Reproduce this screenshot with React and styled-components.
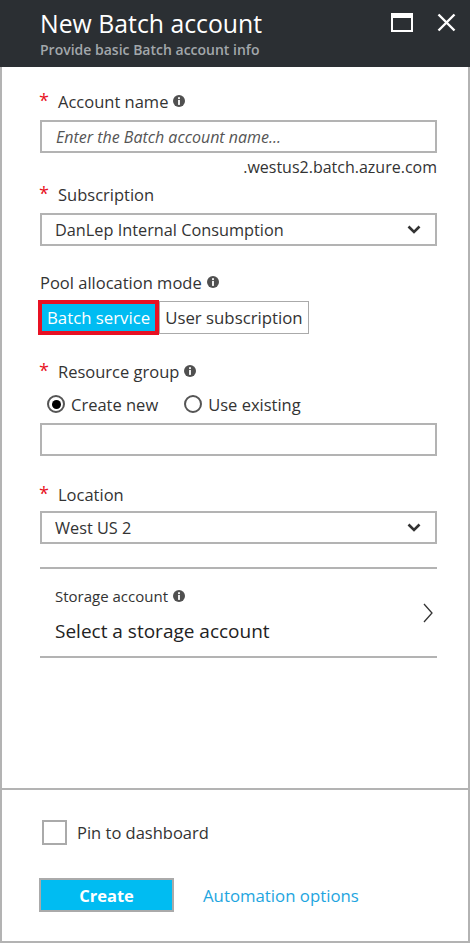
import React from 'react'
import styled, { createGlobalStyle } from 'styled-components'

const GlobalStyle = createGlobalStyle`
  html, body {
    margin: 0;
    padding: 0;
    background: #ffffff;
  }
  body {
    font-family: "Open Sans", "Noto Sans", sans-serif;
    color: #333333;
  }
`

const Blade = styled.div`
  width: 470px;
  height: 943px;
  display: flex;
  flex-direction: column;
`

const Header = styled.div`
  height: 67px;
  background: #2b2f33;
  display: flex;
  align-items: flex-start;
  justify-content: space-between;
  padding: 0 14px 0 40px;
  box-sizing: border-box;
`

const TitleBlock = styled.div`
  padding-top: 8px;
`

const Title = styled.div`
  font-size: 24.8px;
  line-height: 30px;
  color: #ffffff;
  font-weight: 400;
`

const Subtitle = styled.div`
  margin-top: 4px;
  font-size: 14px;
  line-height: 16px;
  color: #a2a7ab;
  font-weight: 600;
`

const HeaderActions = styled.div`
  display: flex;
  gap: 24px;
  padding-top: 13px;
`

const Body = styled.div`
  flex: 1;
  display: flex;
  flex-direction: column;
  border: 2px solid #b3b3b3;
  border-top: none;
  min-height: 0;
`

const Form = styled.div`
  flex: 1;
  padding: 23px 31px 0 38px;
`

const Field = styled.div`
  margin-top: ${p => p.$gap || 0}px;
`

const Label = styled.div`
  display: flex;
  align-items: center;
  height: 22px;
  font-size: 16.5px;
  color: #333333;
  margin-bottom: ${p => p.$space ?? 8}px;
`

const Star = styled.span`
  color: #e81123;
  font-size: 18px;
  width: 19px;
  margin-left: -1px;
  align-self: flex-start;
  line-height: 20px;
`

const TextInput = styled.div`
  height: 33px;
  border: 2px solid #b3b3b3;
  box-sizing: border-box;
  display: flex;
  align-items: center;
  padding-left: 14px;
  font-size: 16px;
  font-style: italic;
  color: #555555;
`

const Hint = styled.div`
  margin-top: 4px;
  text-align: right;
  font-size: 16px;
  line-height: 20px;
  color: #333333;
`

const Select = styled.div`
  height: 33px;
  border: 2px solid #b3b3b3;
  box-sizing: border-box;
  display: flex;
  align-items: center;
  padding-right: 14px;
`

const SelectValue = styled.span`
  flex: 1;
  padding-left: 13px;
  font-size: 16.3px;
  color: #333333;
`

const Toggle = styled.div`
  display: flex;
  height: 35px;
`

const ToggleOption = styled.div`
  display: flex;
  align-items: center;
  box-sizing: border-box;
  font-size: 16.8px;
  padding: 0 5px;
  background: ${p => (p.$active ? '#00bcf2' : '#ffffff')};
  color: ${p => (p.$active ? '#ffffff' : '#333333')};
  border: ${p => (p.$active ? '4px solid #e81123' : '1px solid #aaaaaa')};
  margin-top: ${p => (p.$active ? 0 : 1)}px;
  height: ${p => (p.$active ? 35 : 33)}px;
  margin-left: ${p => (p.$active ? -2 : 0)}px;
`

const RadioRow = styled.div`
  display: flex;
  align-items: center;
  gap: 26px;
  height: 22px;
  margin: 11px 0 8px 7px;
`

const Radio = styled.label`
  display: flex;
  align-items: center;
  gap: 6px;
  font-size: 16.5px;
  color: #333333;
`

const RadioDot = styled.span`
  width: 18px;
  height: 18px;
  border-radius: 50%;
  border: 2px solid #555555;
  box-sizing: border-box;
  display: flex;
  align-items: center;
  justify-content: center;
  &::after {
    content: '';
    width: 9px;
    height: 9px;
    border-radius: 50%;
    background: ${p => (p.$checked ? '#000000' : 'transparent')};
  }
`

const PickerRow = styled.div`
  margin-top: 23px;
  border-top: 2px solid #b3b3b3;
  border-bottom: 2px solid #b3b3b3;
  height: 91px;
  box-sizing: border-box;
  display: flex;
  align-items: center;
  justify-content: space-between;
  padding: 0 4px 0 15px;
`

const PickerText = styled.div`
  display: flex;
  flex-direction: column;
  padding-top: 3px;
`

const PickerLabel = styled.div`
  display: flex;
  align-items: center;
  font-size: 15px;
  line-height: 20px;
  color: #333333;
`

const PickerValue = styled.div`
  margin-top: 13px;
  font-size: 19px;
  line-height: 24px;
  color: #222222;
`

const Footer = styled.div`
  border-top: 2px solid #b3b3b3;
  height: 153px;
  box-sizing: border-box;
  padding: 30px 31px 0 38px;
`

const CheckRow = styled.label`
  display: flex;
  align-items: center;
  gap: 10px;
  margin-left: 2px;
  font-size: 16.5px;
  color: #333333;
`

const CheckBox = styled.span`
  width: 25px;
  height: 25px;
  border: 2px solid #aaaaaa;
  box-sizing: border-box;
`

const Actions = styled.div`
  display: flex;
  align-items: center;
  gap: 29px;
  margin-top: 33px;
`

const CreateButton = styled.button`
  width: 135px;
  height: 34px;
  margin-left: -1px;
  background: #00bcf2;
  border: 2px solid #aaaaaa;
  color: #ffffff;
  font-family: inherit;
  font-size: 16.5px;
  font-weight: 700;
  padding: 0;
`

const LinkText = styled.a`
  color: #1ea5e0;
  font-size: 16.8px;
  text-decoration: none;
`

const InfoIcon = ({ size = 12 }) => (
  <svg width={size} height={size} viewBox="0 0 12 12" style={{ marginLeft: 5 }}>
    <circle cx="6" cy="6" r="6" fill="#505050" />
    <rect x="5.1" y="2.2" width="1.8" height="1.8" fill="#fff" />
    <rect x="5.1" y="4.9" width="1.8" height="5" fill="#fff" />
  </svg>
)

const ChevronDown = () => (
  <svg width="14" height="9" viewBox="0 0 14 9">
    <path d="M1.5 1.5 L7 7 L12.5 1.5" fill="none" stroke="#333" strokeWidth="2.6" />
  </svg>
)

const ChevronRight = () => (
  <svg width="10" height="20" viewBox="0 0 10 20">
    <path d="M1 1 L9 10 L1 19" fill="none" stroke="#333" strokeWidth="1.3" />
  </svg>
)

const MaximizeIcon = () => (
  <svg width="22" height="19" viewBox="0 0 22 19">
    <rect x="1" y="1" width="20" height="17" fill="none" stroke="#fff" strokeWidth="2" />
    <rect x="1" y="1" width="20" height="4" fill="#fff" />
  </svg>
)

const CloseIcon = () => (
  <svg width="19" height="19" viewBox="0 0 19 19">
    <path d="M1.5 1.5 L17.5 17.5 M17.5 1.5 L1.5 17.5" stroke="#fff" strokeWidth="2.4" />
  </svg>
)

function App() {
  return (
    <>
      <GlobalStyle />
      <Blade>
        <Header>
          <TitleBlock>
            <Title>New Batch account</Title>
            <Subtitle>Provide basic Batch account info</Subtitle>
          </TitleBlock>
          <HeaderActions>
            <MaximizeIcon />
            <CloseIcon />
          </HeaderActions>
        </Header>
        <Body>
          <Form>
            <Field>
              <Label>
                <Star>*</Star>Account name<InfoIcon />
              </Label>
              <TextInput>Enter the Batch account name...</TextInput>
              <Hint>.westus2.batch.azure.com</Hint>
            </Field>
            <Field $gap={6}>
              <Label>
                <Star>*</Star>Subscription
              </Label>
              <Select>
                <SelectValue>DanLep Internal Consumption</SelectValue>
                <ChevronDown />
              </Select>
            </Field>
            <Field $gap={25}>
              <Label $space={7}>
                Pool allocation mode<InfoIcon />
              </Label>
              <Toggle>
                <ToggleOption $active>Batch service</ToggleOption>
                <ToggleOption>User subscription</ToggleOption>
              </Toggle>
            </Field>
            <Field $gap={25}>
              <Label $space={0}>
                <Star>*</Star>Resource group<InfoIcon />
              </Label>
              <RadioRow>
                <Radio>
                  <RadioDot $checked />
                  Create new
                </Radio>
                <Radio>
                  <RadioDot />
                  Use existing
                </Radio>
              </RadioRow>
              <TextInput />
            </Field>
            <Field $gap={27}>
              <Label $space={6}>
                <Star>*</Star>Location
              </Label>
              <Select>
                <SelectValue>West US 2</SelectValue>
                <ChevronDown />
              </Select>
            </Field>
            <PickerRow>
              <PickerText>
                <PickerLabel>
                  Storage account<InfoIcon />
                </PickerLabel>
                <PickerValue>Select a storage account</PickerValue>
              </PickerText>
              <ChevronRight />
            </PickerRow>
          </Form>
          <Footer>
            <CheckRow>
              <CheckBox />
              Pin to dashboard
            </CheckRow>
            <Actions>
              <CreateButton>Create</CreateButton>
              <LinkText href="#">Automation options</LinkText>
            </Actions>
          </Footer>
        </Body>
      </Blade>
    </>
  )
}

export default App
